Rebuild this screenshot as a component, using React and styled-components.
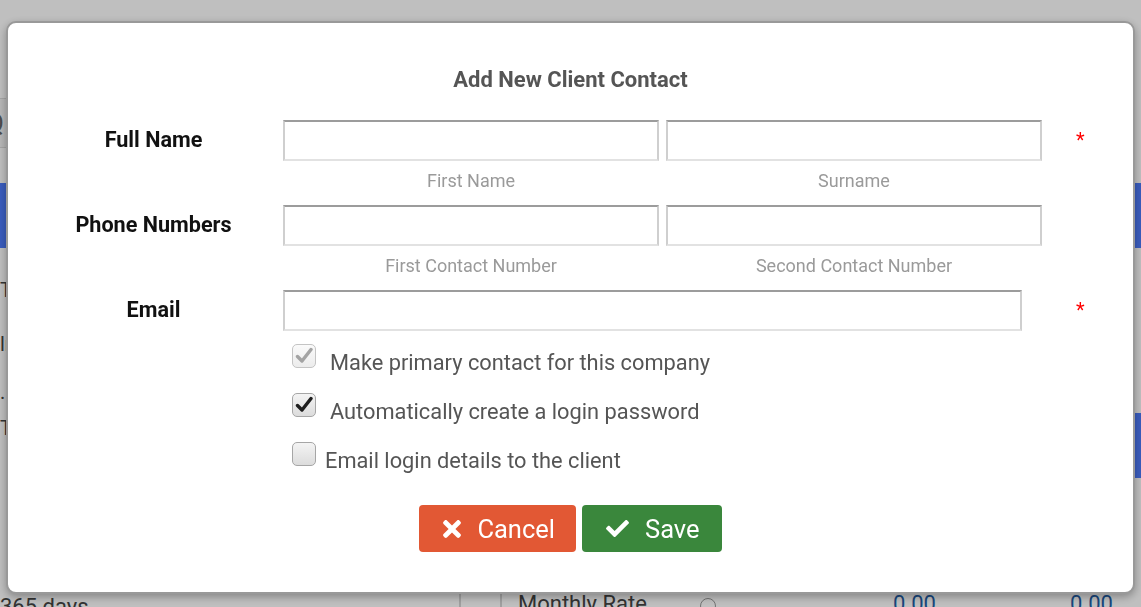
import React from 'react';
import styled, { createGlobalStyle } from 'styled-components';
import { FaTimes, FaCheck } from 'react-icons/fa';

const GlobalStyle = createGlobalStyle`
  html, body { margin: 0; padding: 0; }
  body {
    font-family: Roboto, "Liberation Sans", Arial, sans-serif;
    background: #fff;
    overflow: hidden;
  }
  * { box-sizing: border-box; }
`;

/* ---------- underlying page (dimmed behind the dialog) ---------- */
const Page = styled.div`
  width: 1141px;
  height: 607px;
  overflow: hidden;
  display: flex;
  flex-direction: column;
  background: #fff;
  color: #444;
`;

const TopBar = styled.div`
  flex: none;
  height: 60px;
  background: #fff;
`;

const Body = styled.div`
  flex: 1;
  display: grid;
  grid-template-columns: 461px 41px 1fr;
`;

const LeftPanel = styled.div`
  display: flex;
  flex-direction: column;
  padding-top: 38px;
  border-right: 2px solid #d6d6d6;
`;

const PanelHeader = styled.div`
  height: 50px;
  border-top: 1px solid #dcdcdc;
  border-bottom: 1px solid #dcdcdc;
  background: #f4f4f4;
  display: flex;
  align-items: center;
  font-size: 26px;
  color: #666;
`;

const HeaderGlyph = styled.span`
  margin-left: -14px;
`;

const SelectedItem = styled.div`
  margin-top: 35px;
  height: 65px;
  background: #4d7bfd;
`;

const ListLine = styled.div`
  font-size: 20px;
  line-height: 24px;
  margin-top: ${(p) => p.$gap}px;
  color: #444;
`;

const BottomText = styled.div`
  margin-top: auto;
  font-size: 22px;
  line-height: 24px;
  margin-bottom: -12px;
  color: #444;
`;

const Gutter = styled.div`
  border-right: 2px solid #d6d6d6;
`;

const RightPanel = styled.div`
  display: flex;
  flex-direction: column;
  padding-top: 123px;
`;

const BlueBlock = styled.div`
  align-self: flex-end;
  width: 80px;
  height: 65px;
  background: #4d7bfd;
  margin-top: ${(p) => p.$gap}px;
`;

const BottomRow = styled.div`
  margin-top: auto;
  margin-bottom: -12px;
  display: grid;
  grid-template-columns: 182px 193px 177px 1fr;
  padding-left: 16px;
  font-size: 22px;
  line-height: 24px;
  color: #444;
`;

const Radio = styled.span`
  display: inline-block;
  width: 16px;
  height: 16px;
  border-radius: 50%;
  border: 1px solid #999;
  margin-top: 6px;
`;

const Amount = styled.span`
  color: #1f5fa8;
`;

/* ---------- dialog ---------- */
const Overlay = styled.div`
  position: fixed;
  inset: 0;
  background: rgba(0, 0, 0, 0.25);
  display: flex;
  justify-content: center;
  align-items: flex-start;
  padding-top: 21px;
`;

const Dialog = styled.div`
  width: 1129px;
  height: 573px;
  background: #fff;
  border: 2px solid #999;
  border-radius: 10px;
  box-shadow: 0 3px 8px rgba(0, 0, 0, 0.3);
  display: flex;
  flex-direction: column;
  padding-top: 45px;
`;

const Title = styled.h2`
  margin: 0;
  text-align: center;
  font-size: 22px;
  line-height: 24px;
  font-weight: 700;
  color: #555;
`;

const Form = styled.div`
  margin-top: 28px;
  display: flex;
  flex-direction: column;
  gap: 13px;
`;

const FieldRow = styled.div`
  display: grid;
  grid-template-columns: 275px 759px 1fr;
  align-items: start;
`;

const Label = styled.div`
  height: 41px;
  display: flex;
  align-items: center;
  justify-content: center;
  padding: 0 0 3px 16px;
  font-size: 21.6px;
  font-weight: 700;
  color: #111;
`;

const Fields = styled.div`
  display: grid;
  grid-template-columns: ${(p) => p.$cols};
  column-gap: 7px;
`;

const Field = styled.div`
  display: flex;
  flex-direction: column;
`;

const Input = styled.input`
  display: block;
  width: 100%;
  height: 41px;
  margin: 0;
  padding: 0 8px;
  border: 2px solid #cfcfcf;
  border-top-color: #9c9c9c;
  border-bottom-color: #e2e2e2;
  border-radius: 0;
  background: #fff;
  font: inherit;
  outline: none;
`;

const Helper = styled.div`
  margin-top: 9px;
  text-align: center;
  font-size: 18px;
  line-height: 22px;
  color: #9a9a9a;
`;

const Required = styled.div`
  padding-left: 34px;
  height: 41px;
  line-height: 41px;
  font-size: 20px;
  color: #f00;
`;

const CheckList = styled.div`
  margin: 13px 0 0 284px;
  display: flex;
  flex-direction: column;
  gap: 18px;
`;

const CheckRow = styled.label`
  display: flex;
  align-items: flex-start;
  gap: ${(p) => p.$gap}px;
`;

const Box = styled.span`
  flex: none;
  width: 24px;
  height: 24px;
  border-radius: 5px;
  border: 1px solid ${(p) => (p.$disabled ? '#c4c4c4' : '#a6a6a6')};
  background: ${(p) =>
    p.$disabled
      ? 'linear-gradient(#fafafa, #ececec)'
      : 'linear-gradient(#f4f4f4, #dcdcdc)'};
  display: flex;
  align-items: center;
  justify-content: center;
`;

const CheckText = styled.span`
  margin-top: 7px;
  font-size: 21.8px;
  line-height: 24px;
  color: #555;
`;

const ButtonBar = styled.div`
  margin-top: 32px;
  display: flex;
  justify-content: center;
  gap: 6px;
`;

const Button = styled.button`
  height: 47px;
  padding: 0 ${(p) => p.$right}px 0 24px;
  border: none;
  border-radius: 4px;
  background: ${(p) => p.$bg};
  color: #fff;
  font-family: inherit;
  font-size: 25.5px;
  display: flex;
  align-items: center;
  gap: 16px;
  cursor: pointer;
`;

const Tick = ({ color }) => (
  <svg width="18" height="18" viewBox="0 0 18 18">
    <path
      d="M2.5 9.5 L7 14 L16 2.5"
      fill="none"
      stroke={color}
      strokeWidth="3.4"
      strokeLinecap="round"
      strokeLinejoin="round"
    />
  </svg>
);

const Checkbox = ({ checked, disabled, gap, children }) => (
  <CheckRow $gap={gap}>
    <Box $disabled={disabled}>
      {checked && <Tick color={disabled ? '#a3a3a3' : '#1e1e1e'} />}
    </Box>
    <CheckText>{children}</CheckText>
  </CheckRow>
);

export default function App() {
  return (
    <>
      <GlobalStyle />
      <Page>
        <TopBar />
        <Body>
          <LeftPanel>
            <PanelHeader>
              <HeaderGlyph>Q</HeaderGlyph>
            </PanelHeader>
            <SelectedItem />
            <ListLine $gap={30}>Terms</ListLine>
            <ListLine $gap={30}>lnvoices</ListLine>
            <ListLine $gap={24}>.</ListLine>
            <ListLine $gap={12}>Tax</ListLine>
            <BottomText>365 days</BottomText>
          </LeftPanel>
          <Gutter />
          <RightPanel>
            <BlueBlock $gap={0} />
            <BlueBlock $gap={165} />
            <BottomRow>
              <span>Monthly Rate</span>
              <span>
                <Radio />
              </span>
              <Amount>0.00</Amount>
              <Amount>0.00</Amount>
            </BottomRow>
          </RightPanel>
        </Body>
      </Page>

      <Overlay>
        <Dialog>
          <Title>Add New Client Contact</Title>
          <Form>
            <FieldRow>
              <Label>Full Name</Label>
              <Fields $cols="1fr 1fr">
                <Field>
                  <Input />
                  <Helper>First Name</Helper>
                </Field>
                <Field>
                  <Input />
                  <Helper>Surname</Helper>
                </Field>
              </Fields>
              <Required>*</Required>
            </FieldRow>
            <FieldRow>
              <Label>Phone Numbers</Label>
              <Fields $cols="1fr 1fr">
                <Field>
                  <Input />
                  <Helper>First Contact Number</Helper>
                </Field>
                <Field>
                  <Input />
                  <Helper>Second Contact Number</Helper>
                </Field>
              </Fields>
            </FieldRow>
            <FieldRow>
              <Label>Email</Label>
              <Fields $cols="739px">
                <Input />
              </Fields>
              <Required>*</Required>
            </FieldRow>
          </Form>
          <CheckList>
            <Checkbox checked disabled gap={14}>
              Make primary contact for this company
            </Checkbox>
            <Checkbox checked gap={14}>
              Automatically create a login password
            </Checkbox>
            <Checkbox gap={9}>Email login details to the client</Checkbox>
          </CheckList>
          <ButtonBar>
            <Button $bg="#e25834" $right={21}>
              <FaTimes style={{ width: 18, height: 26 }} />
              Cancel
            </Button>
            <Button $bg="#3a873c" $right={22}>
              <FaCheck style={{ width: 23, height: 23 }} />
              Save
            </Button>
          </ButtonBar>
        </Dialog>
      </Overlay>
    </>
  );
}
